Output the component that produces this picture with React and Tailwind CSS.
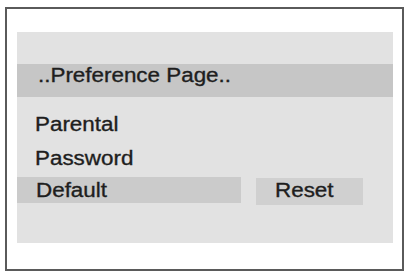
export default function App() {
  const txt = "inline-block origin-left scale-x-[1.12] [-webkit-text-stroke:0.35px_#1e1e1e]";
  return (
    <div className="w-[406px] h-[273px] bg-white overflow-hidden" style={{ fontFamily: '"Liberation Sans", Arial, sans-serif' }}>
      <div className="ml-[5px] mt-[7px] w-[399px] h-[264px] border-2 border-[#5a5a5a] pl-[10px] pt-[23px]">
        <div className="w-[376px] h-[211px] bg-[#e2e2e2] text-[20px] text-[#1e1e1e]">
          <div className="h-[32px]" />
          <div className="h-[33px] bg-[#c6c6c6] pl-[21px] leading-[22px]">
            <span className={txt}>..Preference Page..</span>
          </div>
          <div className="h-[10px]" />
          <div className="h-[34px] pl-[18px] leading-[34px]">
            <span className={txt}>Parental</span>
          </div>
          <div className="h-[34px] pl-[18px] leading-[34px]">
            <span className={txt}>Password</span>
          </div>
          <div className="flex gap-[15px] mt-[2px]">
            <div className="w-[224px] h-[26px] bg-[#cbcbcb] pl-[19px] leading-[26px]">
              <span className={txt}>Default</span>
            </div>
            <div className="w-[107px] h-[27px] mt-[1px] bg-[#d0d0d0] pl-[19px] leading-[24px]">
              <span className={txt}>Reset</span>
            </div>
          </div>
        </div>
      </div>
    </div>
  );
}
